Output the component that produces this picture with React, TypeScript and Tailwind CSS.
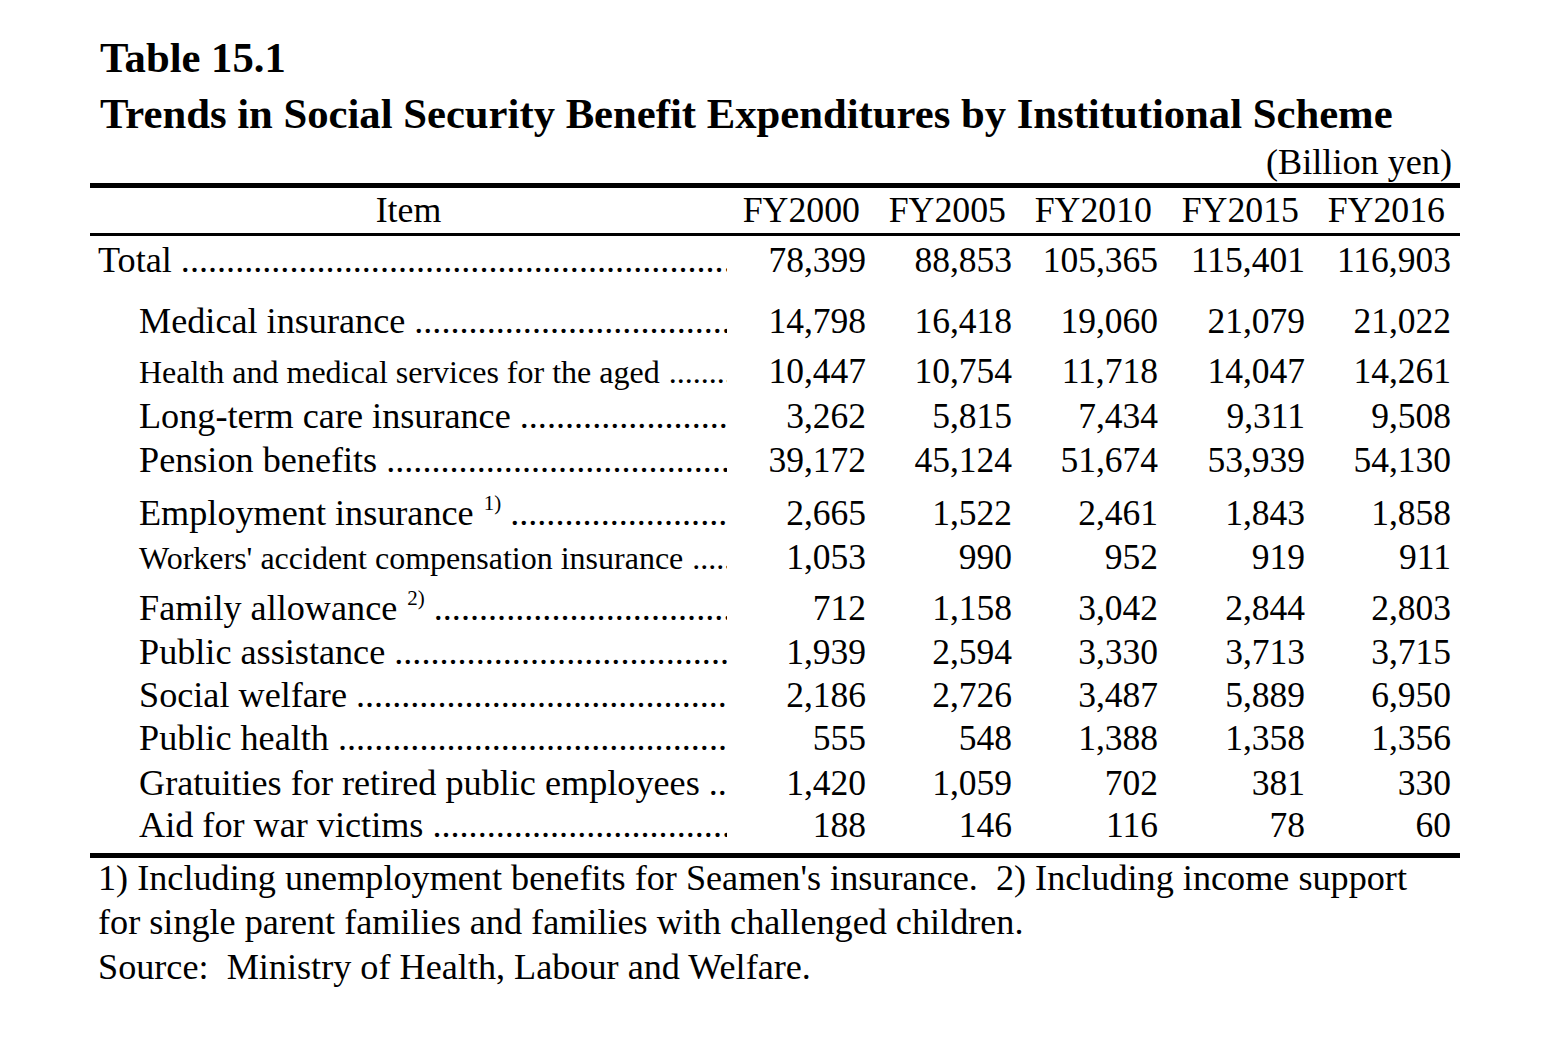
import React from "react";

type Row = {
  label: string;
  sup?: string;
  small?: boolean;
  total?: boolean;
  mt: string;
  vals: string[];
};

const rows: Row[] = [
  { label: "Total", total: true, mt: "mt-[4px]", vals: ["78,399", "88,853", "105,365", "115,401", "116,903"] },
  { label: "Medical insurance", mt: "mt-[21px]", vals: ["14,798", "16,418", "19,060", "21,079", "21,022"] },
  { label: "Health and medical services for the aged", small: true, mt: "mt-[10px]", vals: ["10,447", "10,754", "11,718", "14,047", "14,261"] },
  { label: "Long-term care insurance", mt: "mt-[5px]", vals: ["3,262", "5,815", "7,434", "9,311", "9,508"] },
  { label: "Pension benefits", mt: "mt-[4px]", vals: ["39,172", "45,124", "51,674", "53,939", "54,130"] },
  { label: "Employment insurance", sup: "1)", mt: "mt-[13px]", vals: ["2,665", "1,522", "2,461", "1,843", "1,858"] },
  { label: "Workers' accident compensation insurance", small: true, mt: "mt-[4px]", vals: ["1,053", "990", "952", "919", "911"] },
  { label: "Family allowance", sup: "2)", mt: "mt-[11px]", vals: ["712", "1,158", "3,042", "2,844", "2,803"] },
  { label: "Public assistance", mt: "mt-[4px]", vals: ["1,939", "2,594", "3,330", "3,713", "3,715"] },
  { label: "Social welfare", mt: "mt-[3px]", vals: ["2,186", "2,726", "3,487", "5,889", "6,950"] },
  { label: "Public health", mt: "mt-[3px]", vals: ["555", "548", "1,388", "1,358", "1,356"] },
  { label: "Gratuities for retired public employees", mt: "mt-[5px]", vals: ["1,420", "1,059", "702", "381", "330"] },
  { label: "Aid for war victims", mt: "mt-[2px]", vals: ["188", "146", "116", "78", "60"] },
];

const DOTS = ".".repeat(200);
const colW = ["w-[139px]", "w-[146px]", "w-[146px]", "w-[147px]", "w-[146px]"];

function DataRow({ r }: { r: Row }) {
  return (
    <div className={`flex items-baseline h-[40px] leading-[40px] ${r.mt}`}>
      <div
        className={`w-[637px] flex items-baseline overflow-hidden ${r.total ? "pl-[8px]" : "pl-[49px]"} ${
          r.small ? "text-[32px]" : "text-[36.2px]"
        }`}
      >
        <span className="whitespace-nowrap shrink-0">{r.label}</span>
        {r.sup && (
          <span className="whitespace-nowrap shrink-0 ml-[10px] text-[21px] leading-none relative -top-[15px]">
            {r.sup}
          </span>
        )}
        <span className="ml-[9px] flex-1 overflow-hidden whitespace-nowrap">{DOTS}</span>
      </div>
      {r.vals.map((v, i) => (
        <div key={i} className={`${colW[i]} text-right text-[35.5px] whitespace-nowrap`}>
          {v}
        </div>
      ))}
    </div>
  );
}

export default function App() {
  return (
    <div className="w-[1559px] h-[1040px] bg-white text-black font-['Liberation_Serif','Times_New_Roman',serif] overflow-hidden">
      <div className="pt-[30px] pl-[100px] font-bold text-[42.7px] leading-[56px]">
        <div>Table 15.1</div>
        <div className="whitespace-nowrap">Trends in Social Security Benefit Expenditures by Institutional Scheme</div>
      </div>
      <div className="ml-[90px] w-[1370px]">
        <div className="h-[40px] leading-[40px] text-[36.2px] text-right pr-[8px]">(Billion yen)</div>
        <div className="mt-[1px] h-[5px] bg-black" />
        <div className="mt-[2px] flex h-[40px] leading-[40px] text-[35.8px]">
          <div className="w-[637px] text-center">Item</div>
          {["FY2000", "FY2005", "FY2010", "FY2015", "FY2016"].map((h, i) => (
            <div key={h} className={`${colW[i]} text-right pr-[6px] whitespace-nowrap`}>
              {h}
            </div>
          ))}
        </div>
        <div className="mt-[3px] h-[3px] bg-black" />
        {rows.map((r) => (
          <DataRow key={r.label} r={r} />
        ))}
        <div className="mt-[8px] h-[5px] bg-black" />
      </div>
      <div className="pl-[98px] text-[36.2px]">
        <div className="h-[40px] leading-[40px] whitespace-nowrap">
          1) Including unemployment benefits for Seamen's insurance.&nbsp; 2) Including income support
        </div>
        <div className="mt-[4px] h-[40px] leading-[40px] whitespace-nowrap">
          for single parent families and families with challenged children.
        </div>
        <div className="mt-[5px] h-[40px] leading-[40px] whitespace-nowrap">
          Source:&nbsp; Ministry of Health, Labour and Welfare.
        </div>
      </div>
    </div>
  );
}
